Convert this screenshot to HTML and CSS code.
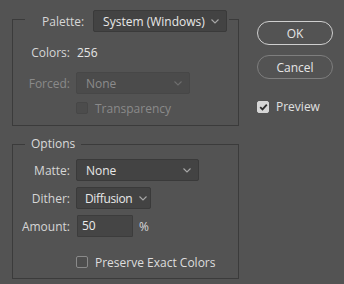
FILE: index.html
```html
<!DOCTYPE html>
<html>
<head>
<meta charset="utf-8">
<link rel="stylesheet" href="styles.css">
</head>
<body>
<div class="dialog">
  <div class="main">
    <fieldset class="group palette">
      <legend class="legend-palette">
        <span class="label">Palette:</span>
        <div class="select w134">
          <span>System (Windows)</span>
          <svg class="chev" width="8" height="5" viewBox="0 0 8 5"><path d="M0.5 0.5 L4 4 L7.5 0.5" fill="none" stroke="#a8a8a8" stroke-width="1.1"/></svg>
        </div>
      </legend>
      <div class="rows rows-palette">
        <span class="label r1">Colors:</span>
        <span class="value r1">256</span>
        <span class="label disabled r2">Forced:</span>
        <div class="select disabled-select w114 r2">
          <span>None</span>
          <svg class="chev" width="8" height="5" viewBox="0 0 8 5"><path d="M0.5 0.5 L4 4 L7.5 0.5" fill="none" stroke="#6e6e6e" stroke-width="1.1"/></svg>
        </div>
        <span class="r3"></span>
        <label class="check disabled r3"><span class="box box-disabled"></span>Transparency</label>
      </div>
    </fieldset>
    <fieldset class="group options">
      <legend class="legend-options">Options</legend>
      <div class="rows rows-options">
        <span class="label">Matte:</span>
        <div class="select w123">
          <span>None</span>
          <svg class="chev" width="8" height="5" viewBox="0 0 8 5"><path d="M0.5 0.5 L4 4 L7.5 0.5" fill="none" stroke="#a8a8a8" stroke-width="1.1"/></svg>
        </div>
        <span class="label">Dither:</span>
        <div class="select w75 tight">
          <span class="condensed">Diffusion</span>
          <svg class="chev" width="8" height="5" viewBox="0 0 8 5"><path d="M0.5 0.5 L4 4 L7.5 0.5" fill="none" stroke="#a8a8a8" stroke-width="1.1"/></svg>
        </div>
        <span class="label">Amount:</span>
        <div class="amount">
          <div class="input">50</div>
          <span class="pct">%</span>
        </div>
        <span class="spacer-row"></span>
        <label class="check preserve"><span class="box box-empty"></span>Preserve Exact Colors</label>
      </div>
    </fieldset>
  </div>
  <div class="side">
    <button class="btn btn-ok">OK</button>
    <button class="btn btn-cancel">Cancel</button>
    <label class="check preview"><span class="box box-checked"><svg width="9" height="8" viewBox="0 0 9 8"><path d="M1.2 4.2 L3.5 6.4 L7.8 1.6" fill="none" stroke="#2e2e2e" stroke-width="1.8"/></svg></span>Preview</label>
  </div>
</div>
</body>
</html>
```

FILE: styles.css
```css
html, body {
  margin: 0;
  padding: 0;
  background: #535353;
}
body {
  font-family: "Open Sans", "Noto Sans", sans-serif;
  font-size: 12px;
  color: #d8d8d8;
  width: 344px;
  height: 284px;
  overflow: hidden;
}
.dialog {
  display: flex;
  padding: 6px 11px 0 12px;
  gap: 18px;
}
.main {
  width: 228px;
  display: flex;
  flex-direction: column;
}
.group {
  margin: 0;
  padding: 0;
  border: 1px solid #3b3b3b;
  min-width: 0;
}
.legend-palette {
  margin-left: 12px;
  padding: 4px 2px 0 2px;
  display: flex;
  align-items: center;
  gap: 9px;
}
.legend-palette .label {
  margin-left: 15px;
}
.legend-options {
  margin-left: 12px;
  padding: 0 6px;
  height: 16px;
  line-height: 16px;
  color: #dadada;
}
.options {
  margin-top: 10px;
}
.rows {
  display: grid;
  grid-template-columns: 57px 1fr;
  column-gap: 6px;
  align-items: center;
}
.rows-palette {
  padding: 10px 0 9px 0;
  grid-template-rows: 20px 32px 22px;
}
.rows-palette .r2 { margin-top: 10px; }
.rows-palette .r3 { margin-top: 6px; }
.rows-options {
  padding: 7px 0 8px 0;
  row-gap: 6px;
  grid-template-rows: 22px 22px 22px 27px;
}
.label {
  text-align: right;
  white-space: nowrap;
  color: #d6d6d6;
}
.value {
  color: #e6e6e6;
  padding-left: 1px;
}
.disabled {
  color: #8a8a8a;
}
.select {
  box-sizing: border-box;
  height: 22px;
  display: flex;
  align-items: center;
  gap: 4px;
  padding: 0 7px 0 9px;
  background: #434343;
  border: 1px solid #3a3a3a;
  border-radius: 2px;
  color: #e8e8e8;
  white-space: nowrap;
}
.select.tight {
  padding: 0 3px 0 8px;
}
.condensed {
  letter-spacing: -0.35px;
}
.select .chev {
  margin-left: auto;
  flex: none;
}
.disabled-select {
  background: #4b4b4b;
  border-color: #474747;
  color: #8c8c8c;
}
.w134 { width: 134px; }
.w114 { width: 114px; }
.w123 { width: 123px; }
.w75 { width: 75px; }
.amount {
  display: flex;
  align-items: center;
  gap: 6px;
}
.input {
  box-sizing: border-box;
  width: 56px;
  height: 22px;
  line-height: 20px;
  padding-left: 4px;
  background: #454545;
  border: 1px solid #3c3c3c;
  border-radius: 1px;
  color: #ececec;
  margin-left: 1px;
}
.pct {
  color: #d8d8d8;
}
.check {
  display: flex;
  align-items: center;
  gap: 7px;
  white-space: nowrap;
}
.preserve {
  align-self: end;
  height: 16px;
  color: #dedede;
}
.box {
  box-sizing: border-box;
  width: 12px;
  height: 12px;
  border-radius: 2px;
  display: flex;
  align-items: center;
  justify-content: center;
  flex: none;
}
.box-disabled {
  background: #4c4c4c;
  border: 1px solid #474747;
}
.box-empty {
  background: #4e4e4e;
  border: 1px solid #8a8a8a;
}
.box-checked {
  background: #d6d6d6;
  border: 1px solid #d6d6d6;
}
.side {
  width: 76px;
  display: flex;
  flex-direction: column;
  padding-top: 15px;
}
.btn {
  box-sizing: border-box;
  width: 76px;
  height: 24px;
  border-radius: 12px;
  background: transparent;
  font-family: inherit;
  font-size: 12px;
  color: #e6e6e6;
  padding: 0;
}
.btn-ok {
  border: 1.5px solid #cfcfcf;
}
.btn-cancel {
  margin-top: 10px;
  border: 1px solid #7e7e7e;
}
.preview {
  margin-top: 19px;
  color: #e0e0e0;
}
```
